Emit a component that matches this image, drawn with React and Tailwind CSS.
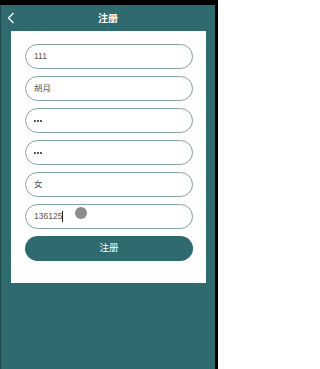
const fields = [
  { value: '111' },
  { value: '胡月' },
  { dots: true },
  { dots: true },
  { value: '女' },
  { value: '136125', caret: true },
]

const Field = ({ value, dots, caret }) => (
  <div className="h-[25px] rounded-full border border-[#86a3a5] flex items-center pl-[8px]">
    {dots ? (
      <div className="flex gap-[1px] pt-[1px]">
        <span className="size-[2px] rounded-full bg-[#222]" />
        <span className="size-[2px] rounded-full bg-[#222]" />
        <span className="size-[2px] rounded-full bg-[#222]" />
      </div>
    ) : (
      <span className="text-[8.5px] text-[#555]">{value}</span>
    )}
    {caret && <span className="w-px h-[11px] bg-[#222]" />}
  </div>
)

export default function App() {
  return (
    <div
      className="w-[218px] h-[369px] bg-black flex flex-col pt-[5px] pr-[3px]"
      style={{ fontFamily: '"Liberation Sans", "Noto Sans CJK SC", sans-serif' }}
    >
      <div className="flex-1 bg-[#2f6a6e] border-l border-[#1f4a4d] flex flex-col">
        {/* header */}
        <div className="relative h-[26px] flex items-center justify-center">
          <svg className="absolute left-[6px] top-[7px]" width="9" height="12" viewBox="0 0 9 12">
            <polyline points="6.5,1 1.5,6 6.5,11" fill="none" stroke="#fff" strokeWidth="1.2" />
          </svg>
          <span className="text-white text-[10px] font-bold">注册</span>
        </div>

        {/* card */}
        <div className="relative ml-[10px] mr-[9px] bg-white pt-[13px] pb-[22px] pl-[14px] pr-[13px] flex flex-col gap-[7px]">
          {fields.map((f, i) => (
            <Field key={i} {...f} />
          ))}
          <button className="h-[25px] rounded-full bg-[#2f6a6e] text-white text-[9.5px]">注册</button>
          {/* touch indicator */}
          <span className="absolute left-[64px] top-[176px] size-[12px] rounded-full bg-[#8c8c8c]" />
        </div>
      </div>
    </div>
  )
}
